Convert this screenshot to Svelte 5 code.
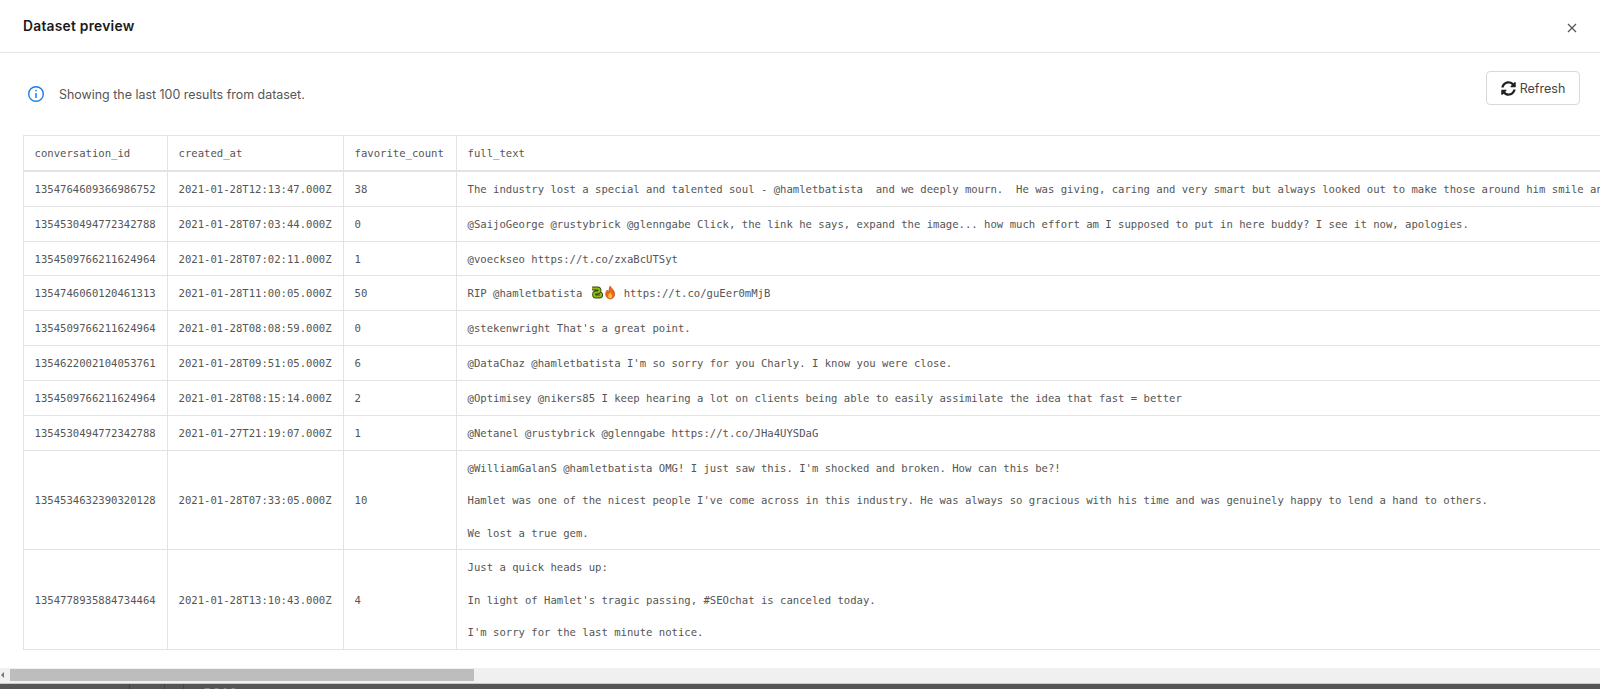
<script>
    const rows = [
        ['1354764609366986752', '2021-01-28T12:13:47.000Z', '38', 'The industry lost a special and talented soul - @hamletbatista  and we deeply mourn.  He was giving, caring and very smart but always looked out to make those around him smile and'],
        ['1354530494772342788', '2021-01-28T07:03:44.000Z', '0', '@SaijoGeorge @rustybrick @glenngabe Click, the link he says, expand the image... how much effort am I supposed to put in here buddy? I see it now, apologies.'],
        ['1354509766211624964', '2021-01-28T07:02:11.000Z', '1', '@voeckseo https://t.co/zxaBcUTSyt'],
        ['1354746060120461313', '2021-01-28T11:00:05.000Z', '50', 'RIP'],
        ['1354509766211624964', '2021-01-28T08:08:59.000Z', '0', "@stekenwright That's a great point."],
        ['1354622002104053761', '2021-01-28T09:51:05.000Z', '6', "@DataChaz @hamletbatista I'm so sorry for you Charly. I know you were close."],
        ['1354509766211624964', '2021-01-28T08:15:14.000Z', '2', '@Optimisey @nikers85 I keep hearing a lot on clients being able to easily assimilate the idea that fast = better'],
        ['1354530494772342788', '2021-01-27T21:19:07.000Z', '1', '@Netanel @rustybrick @glenngabe https://t.co/JHa4UYSDaG'],
        ['1354534632390320128', '2021-01-28T07:33:05.000Z', '10', "@WilliamGalanS @hamletbatista OMG! I just saw this. I'm shocked and broken. How can this be?!\n\nHamlet was one of the nicest people I've come across in this industry. He was always so gracious with his time and was genuinely happy to lend a hand to others.\n\nWe lost a true gem."],
        ['1354778935884734464', '2021-01-28T13:10:43.000Z', '4', "Just a quick heads up:\n\nIn light of Hamlet's tragic passing, #SEOchat is canceled today.\n\nI'm sorry for the last minute notice."]
    ];
    const columns = ['conversation_id', 'created_at', 'favorite_count', 'full_text'];
</script>

<div class="page">
    <header class="modal-head">
        <h2>Dataset preview</h2>
        <button class="close" aria-label="Close">
            <svg width="10" height="10" viewBox="0 0 10 10"><path d="M1 1l8 8M9 1l-8 8" stroke="#555" stroke-width="1.2" fill="none"/></svg>
        </button>
    </header>

    <div class="toolbar">
        <div class="notice">
            <svg width="18" height="18" viewBox="0 0 18 18" fill="none">
                <circle cx="9" cy="9" r="7.3" stroke="#1a7fe8" stroke-width="1.4"/>
                <path d="M9 8v5" stroke="#1a7fe8" stroke-width="1.5"/>
                <circle cx="9" cy="5.6" r="0.9" fill="#1a7fe8"/>
            </svg>
            <span>Showing the last 100 results from dataset.</span>
        </div>
        <button class="refresh">
            <svg width="15" height="15" viewBox="0 0 512 512"><path fill="#222" d="M370.72 133.28C339.458 104.008 298.888 87.962 255.848 88c-77.458.068-144.328 53.178-162.791 126.85-1.344 5.363-6.122 9.15-11.651 9.15H24.103c-7.498 0-13.194-6.807-11.807-14.176C33.933 94.924 134.813 8 256 8c66.448 0 126.791 26.136 171.315 68.685L463.03 40.97C478.149 25.851 504 36.559 504 57.941V192c0 13.255-10.745 24-24 24H345.941c-21.382 0-32.09-25.851-16.971-40.971l41.75-41.749zM32 296h134.059c21.382 0 32.09 25.851 16.971 40.971l-41.75 41.75c31.262 29.273 71.835 45.319 114.876 45.28 77.418-.07 144.315-53.144 162.787-126.849 1.344-5.363 6.122-9.15 11.651-9.15h57.304c7.498 0 13.194 6.807 11.807 14.176C478.067 417.076 377.187 504 256 504c-66.448 0-126.791-26.136-171.315-68.685L48.97 471.03C33.851 486.149 8 475.441 8 454.059V320c0-13.255 10.745-24 24-24z"/></svg>
            Refresh
        </button>
    </div>

    <div class="table-wrap">
        <table>
            <colgroup>
                <col class="c-id" />
                <col class="c-date" />
                <col class="c-fav" />
                <col class="c-text" />
            </colgroup>
            <thead>
                <tr>
                    {#each columns as col}
                        <th>{col}</th>
                    {/each}
                </tr>
            </thead>
            <tbody>
                {#each rows as row, i}
                    <tr>
                        <td class="nowrap">{row[0]}</td>
                        <td class="nowrap">{row[1]}</td>
                        <td class="nowrap">{row[2]}</td>
                        {#if i === 3}
                            <td>RIP @hamletbatista <svg class="emoji" width="14.3" height="15" viewBox="0 0 14 15" fill="none"><path d="M3 3.500h5.500c2.500 0 2.500 4-.5 4H6.500c-2 0-2 4 0 4h4c1.500 0 2-2 .5-3" stroke="#33480a" stroke-width="4"/><path d="M3 3.500h5.500c2.500 0 2.500 4-.5 4H6.500c-2 0-2 4 0 4h4c1.500 0 2-2 .5-3" stroke="#93b81e" stroke-width="2.200"/></svg><svg class="emoji" width="14.3" height="15" viewBox="0 0 14 15"><path d="M7 1c1 2.500 4.500 4 4.500 8a4.500 5 0 0 1-9 0c0-2 1-3 1.500-4 .5 1 1 1.500 1.500 1.500C6 5 6 3 7 1z" fill="#f0651a" stroke="#a5400f" stroke-width=".6"/><path d="M7 7.500c.8 1.200 2 2 2 3.500a2 2.200 0 0 1-4 0c0-1.500 1.500-2 2-3.500z" fill="#fcc02e"/></svg> https://t.co/guEer0mMjB</td>
                        {:else}
                            <td>{row[3]}</td>
                        {/if}
                    </tr>
                {/each}
            </tbody>
        </table>
    </div>

    <div class="scrollbar">
        <span class="arrow"></span>
        <span class="thumb"></span>
    </div>
    <div class="behind">
        <span class="cell c1"></span>
        <span class="cell c2"></span>
        <span class="cell c3"></span>
        <span class="cell c4">5010</span>
    </div>
</div>

<style>
    :global(body) {
        margin: 0;
        background: #fff;
    }

    .page {
        height: 689px;
        overflow: hidden;
        display: flex;
        flex-direction: column;
        font-family: Inter, "Liberation Sans", sans-serif;
    }

    .modal-head {
        height: 53px;
        box-sizing: border-box;
        flex: none;
        display: flex;
        align-items: center;
        justify-content: space-between;
        padding: 0 23px 0 23px;
        border-bottom: 1px solid #e6e6e6;
    }

    h2 {
        margin: 0;
        font-size: 13.8px;
        font-weight: 600;
        letter-spacing: 0.25px;
        color: #1a1a1a;
    }

    .close {
        border: 0;
        background: none;
        padding: 0;
        display: flex;
        margin-top: 4px;
    }

    .toolbar {
        flex: none;
        height: 82px;
        box-sizing: border-box;
        display: flex;
        align-items: flex-start;
        justify-content: space-between;
        padding: 18px 20px 0 27px;
    }

    .notice {
        display: flex;
        align-items: center;
        gap: 14px;
        margin-top: 14px;
        font-size: 12.45px;
        color: #555;
    }

    .refresh {
        width: 94px;
        height: 34px;
        display: flex;
        align-items: center;
        justify-content: center;
        gap: 4px;
        background: #fff;
        border: 1px solid #d9d9d9;
        border-radius: 4px;
        font: 12.5px Inter, "Liberation Sans", sans-serif;
        color: #444;
    }

    .table-wrap {
        flex: none;
        height: 533px;
        overflow: hidden;
        padding-left: 23px;
    }

    table {
        table-layout: fixed;
        width: 1933px;
        border-collapse: collapse;
        font-family: "DejaVu Sans Mono", "Liberation Mono", monospace;
        font-size: 10.6px;
        line-height: 16.25px;
        color: #555;
        white-space: pre-wrap;
    }

    .c-id { width: 144px; }
    .c-date { width: 176px; }
    .c-fav { width: 113px; }

    th, td {
        border: 1px solid #e3e3e3;
        padding: 9px 11px 8.6px 10.5px;
        text-align: left;
        font-weight: 400;
    }

    th {
        border-bottom-width: 2px;
    }

    .nowrap {
        white-space: nowrap;
    }

    .emoji {
        vertical-align: -3px;
    }

    .scrollbar {
        flex: none;
        height: 16px;
        background: #f0f0f0;
        display: flex;
        align-items: flex-start;
        border-bottom: 1px solid #c8c8c8;
        box-sizing: border-box;
    }

    .arrow {
        width: 0;
        height: 0;
        margin: 4px 6px 0 1px;
        border: 3px solid transparent;
        border-right: 3px solid #777;
        border-left: 0;
    }

    .thumb {
        width: 464px;
        height: 12px;
        margin-top: 1px;
        background: #bdbdbd;
    }

    .behind {
        flex: 1;
        display: flex;
        background: #555;
        overflow: hidden;
    }

    .cell {
        box-sizing: border-box;
        border-right: 1px solid #444;
    }

    .c1 { width: 130px; }
    .c2 { width: 35px; }
    .c3 { width: 19px; }

    .c4 {
        border: 0;
        padding: 1px 0 0 19px;
        font-size: 13px;
        letter-spacing: 1.5px;
        line-height: 16px;
        color: #888;
    }
</style>
